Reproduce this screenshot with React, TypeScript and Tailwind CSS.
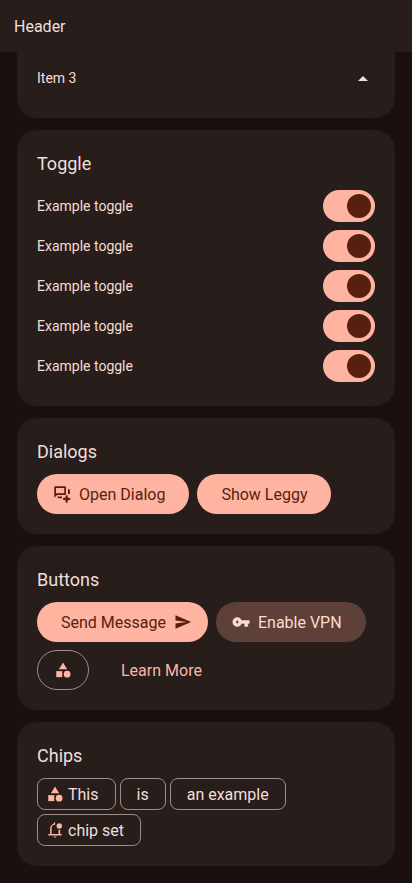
import type { ReactNode } from "react";
import { MdArrowDropUp, MdCategory, MdSend } from "react-icons/md";

function DialogIcon() {
  return (
    <svg viewBox="0 0 24 24" className="size-[18px] shrink-0" fill="currentColor">
      <path d="M1.700 17V3c0-.7.6-1.300 1.300-1.300h13c.7 0 1.300.6 1.300 1.300v9c0 .7-.6 1.300-1.300 1.300H5.500zM4 11h11V4H4z" fillRule="evenodd" />
      <path d="M20 5.500h1.300c.7 0 1.200.5 1.200 1.200V12H20zM6 15.300h6v2.400H7.200c-.7 0-1.200-.5-1.200-1.200z" />
      <path d="M17.200 13.500h2l.6 3.300 3.400.7v2l-3.400.7-.6 3.300h-2l-.6-3.300-3.400-.7v-2l3.400-.7z" />
    </svg>
  );
}

function KeyIcon() {
  return (
    <svg viewBox="0 0 24 24" className="size-[18px] shrink-0" fill="currentColor" stroke="currentColor" strokeWidth="0.6">
      <path d="M12.650 10C11.830 7.670 9.610 6 7 6c-3.310 0-6 2.690-6 6s2.690 6 6 6c2.610 0 4.830-1.670 5.650-4H17v4h4v-4h2v-4H12.650zM7 14c-1.100 0-2-.9-2-2s.9-2 2-2 2 .9 2 2-.9 2-2 2z" />
    </svg>
  );
}

function BellIcon() {
  return (
    <svg viewBox="0 -960 960 960" className="size-[18px] shrink-0 text-[#ffb4a1]" fill="currentColor">
      <path d="M480-70q-30 0-50-18t-20-52h140q0 34-20 52t-50 18ZM125-190v-80h95v-290q0-86 52-151t134-85v-24q0-28 20-49t48-21q18 0 32 8-26 44-26 94v22q-76 0-128 52t-52 126v318h370v-230q21 5 42 5t43-5v230h85v80H125Z" />
      <circle cx="710" cy="-690" r="145" />
    </svg>
  );
}

function Card({ title, className = "", children }: { title: string; className?: string; children: ReactNode }) {
  return (
    <section className={`rounded-[20px] bg-[#271d1b] p-5 ${className}`}>
      <h2 className="h-7 text-lg leading-7">{title}</h2>
      {children}
    </section>
  );
}

function Toggle() {
  return (
    <div className="flex h-8 items-center justify-between text-sm">
      <span>Example toggle</span>
      <button role="switch" aria-checked="true" aria-label="Example toggle" className="flex h-8 w-[52px] items-center justify-end rounded-full bg-[#ffb4a1] pr-1">
        <span className="size-6 rounded-full bg-[#561f0f]" />
      </button>
    </div>
  );
}

const button = "flex h-10 items-center gap-2 whitespace-nowrap rounded-full leading-[normal]";
const chip = "flex h-8 items-center whitespace-nowrap rounded-lg border border-[#a08c87] leading-[normal]";

export default function App() {
  return (
    <div className="flex h-[883px] w-[412px] flex-col overflow-hidden bg-[#1a110f] font-[Roboto,sans-serif] text-base text-[#f1dfda]">
      <header className="flex h-[52px] shrink-0 items-center bg-[#271d1b] px-3.5 leading-[normal]">Header</header>
      <main className="flex flex-col gap-3 px-[17px]">
        <section className="flex h-[66px] items-start justify-between rounded-b-[20px] bg-[#271d1b] px-5 pt-4 text-sm">
          <span>Item 3</span>
          <MdArrowDropUp className="-mt-px size-6" />
        </section>

        <Card title="Toggle" className="h-[276px]">
          <div className="mt-3 flex flex-col gap-2">
            <Toggle />
            <Toggle />
            <Toggle />
            <Toggle />
            <Toggle />
          </div>
        </Card>

        <Card title="Dialogs" className="h-[116px]">
          <div className="mt-2 flex gap-2">
            <button className={`${button} bg-[#ffb4a1] pr-6 pl-4 text-[#561f0f]`}>
              <DialogIcon />
              Open Dialog
            </button>
            <button className={`${button} bg-[#ffb4a1] px-6 text-[#561f0f]`}>Show Leggy</button>
          </div>
        </Card>

        <Card title="Buttons" className="h-[164px]">
          <div className="mt-2 flex flex-wrap gap-2">
            <button className={`${button} bg-[#ffb4a1] pr-4 pl-6 text-[#561f0f]`}>
              Send Message
              <MdSend className="size-[18px]" />
            </button>
            <button className={`${button} bg-[#5d4037] pr-6 pl-4 text-[#ffdbd1]`}>
              <KeyIcon />
              Enable VPN
            </button>
            <button aria-label="Category" className={`${button} border border-[#a08c87] px-4 text-[#ffb4a1]`}>
              <MdCategory className="size-[18px]" />
            </button>
            <button className={`${button} px-6 text-[#ffb4a1]`}>Learn More</button>
          </div>
        </Card>

        <Card title="Chips" className="h-[144px]">
          <div className="mt-2 flex flex-wrap gap-1">
            <div className={`${chip} gap-1 pr-4 pl-2`}>
              <MdCategory className="size-[18px] text-[#ffb4a1]" />
              This
            </div>
            <div className={`${chip} px-4`}>is</div>
            <div className={`${chip} px-4`}>an example</div>
            <div className={`${chip} gap-1 pr-4 pl-2`}>
              <BellIcon />
              chip set
            </div>
          </div>
        </Card>
      </main>
    </div>
  );
}
